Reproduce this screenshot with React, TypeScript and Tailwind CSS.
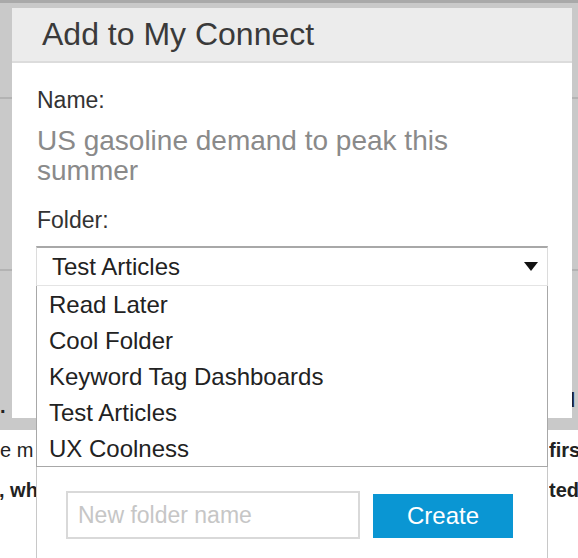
const folders = ['Read Later', 'Cool Folder', 'Keyword Tag Dashboards', 'Test Articles', 'UX Coolness'];

function Caret() {
  return (
    <svg width="14" height="9" viewBox="0 0 14 9" className="shrink-0">
      <path d="M0 0 H14 L7 9 Z" fill="#111" />
    </svg>
  );
}

function FolderSelect() {
  return (
    <div className="relative">
      <div className="flex h-[40px] items-center justify-between border border-t-2 border-[#dcdcdc] border-t-[#a8a8a8] border-b-[#e4e4e4] pl-[15px] pr-[9px]">
        <span className="text-[24px] leading-[37px] text-[#222]">Test Articles</span>
        <Caret />
      </div>

      {/* open dropdown, hangs past the modal */}
      <div className="absolute left-0 top-full z-10 w-full bg-white">
        <ul className="border-x border-b border-[#a8a8a8]">
          {folders.map((f) => (
            <li key={f} className="h-[36px] px-[12px] pt-[2px] text-[24px] leading-[34px] text-[#222]">
              {f}
            </li>
          ))}
        </ul>
        <div className="flex h-[120px] items-start border-x border-[#c8c8c8] pl-[29px] pt-[24px]">
          <input
            placeholder="New folder name"
            className="h-[48px] w-[294px] border-2 border-[#d9d9d9] px-[10px] text-[23px] text-[#333] outline-none placeholder:text-[#c6c6c6]"
          />
          <button className="ml-[13px] mt-[3px] h-[44px] w-[140px] bg-[#0a96d3] text-[24px] text-white">
            Create
          </button>
        </div>
      </div>
    </div>
  );
}

function Modal() {
  return (
    <div className="relative z-10 mt-[5px] flex h-[410px] w-[560px] shrink-0 flex-col bg-white">
      <div className="h-[55px] shrink-0 border-b-2 border-[#dcdcdc] bg-[#ececec] pl-[30px]">
        <h2 className="text-[32px] leading-[53px] text-[#3a3a3a]">Add to My Connect</h2>
      </div>
      <div className="flex flex-col px-[24px] pt-[23px]">
        <div className="pl-px text-[23px] leading-[28px] text-[#333]">Name:</div>
        <div className="mt-[12px] pl-px text-[28px] leading-[30px] text-[#8a8a8a]">
          US gasoline demand to peak this
          <br />
          summer
        </div>
        <div className="mt-[20px] pl-px text-[23px] leading-[28px] text-[#333]">Folder:</div>
        <div className="mt-[12px]">
          <FolderSelect />
        </div>
      </div>
    </div>
  );
}

export default function App() {
  return (
    <div className="relative h-[558px] w-[578px] overflow-hidden bg-white font-['Liberation_Sans',Arial,sans-serif]">
      <div className="flex h-[430px] border-t-[3px] border-[#a9a9a9] bg-[#c9c9c9]">
        <div className="flex w-[12px] shrink-0 flex-col overflow-hidden">
          <div className="mt-[94px] h-[2px] bg-[#b3b3b3]" />
          <div className="mt-[170px] h-[2px] bg-[#b3b3b3]" />
          <div className="mt-[123px] text-[20px] font-bold leading-[24px] text-[#222]">.</div>
        </div>
        <Modal />
        <div className="flex w-[6px] shrink-0 flex-col overflow-hidden">
          <div className="mt-[94px] h-[2px] bg-[#b3b3b3]" />
          <div className="mt-[170px] h-[2px] bg-[#b3b3b3]" />
          <div className="-ml-[9px] mt-[117px] text-[20px] font-bold leading-[24px] text-[#1d2233]">d</div>
        </div>
      </div>

      <div className="flex flex-col text-[20px] leading-[40px] text-[#222]">
        <div className="flex justify-between whitespace-nowrap">
          <span>e m</span>
          <span className="w-[29px] overflow-hidden font-bold">first</span>
        </div>
        <div className="flex justify-between whitespace-nowrap font-bold">
          <span className="-ml-[1px]">, wh</span>
          <span className="w-[29px] overflow-hidden">ted</span>
        </div>
      </div>
    </div>
  );
}
